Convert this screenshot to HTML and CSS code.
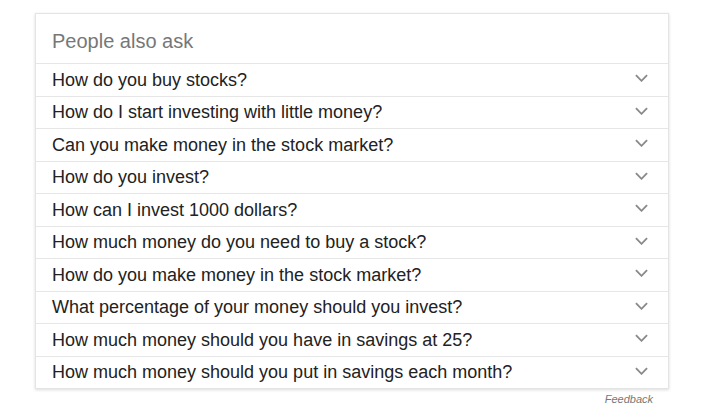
FILE: index.html
```html
<!DOCTYPE html>
<html>
<head>
<meta charset="utf-8">
<link rel="stylesheet" href="styles.css">
</head>
<body>
<div class="wrap">
  <div class="card">
    <div class="head">People also ask</div>
    <div class="row"><span>How do you buy stocks?</span><svg class="chev" viewBox="0 0 14 8"><path d="M1 1l6 6 6-6"/></svg></div>
    <div class="row"><span>How do I start investing with little money?</span><svg class="chev" viewBox="0 0 14 8"><path d="M1 1l6 6 6-6"/></svg></div>
    <div class="row"><span>Can you make money in the stock market?</span><svg class="chev" viewBox="0 0 14 8"><path d="M1 1l6 6 6-6"/></svg></div>
    <div class="row"><span>How do you invest?</span><svg class="chev" viewBox="0 0 14 8"><path d="M1 1l6 6 6-6"/></svg></div>
    <div class="row"><span>How can I invest 1000 dollars?</span><svg class="chev" viewBox="0 0 14 8"><path d="M1 1l6 6 6-6"/></svg></div>
    <div class="row"><span>How much money do you need to buy a stock?</span><svg class="chev" viewBox="0 0 14 8"><path d="M1 1l6 6 6-6"/></svg></div>
    <div class="row"><span>How do you make money in the stock market?</span><svg class="chev" viewBox="0 0 14 8"><path d="M1 1l6 6 6-6"/></svg></div>
    <div class="row"><span>What percentage of your money should you invest?</span><svg class="chev" viewBox="0 0 14 8"><path d="M1 1l6 6 6-6"/></svg></div>
    <div class="row"><span>How much money should you have in savings at 25?</span><svg class="chev" viewBox="0 0 14 8"><path d="M1 1l6 6 6-6"/></svg></div>
    <div class="row"><span>How much money should you put in savings each month?</span><svg class="chev" viewBox="0 0 14 8"><path d="M1 1l6 6 6-6"/></svg></div>
  </div>
  <div class="feedback">Feedback</div>
</div>
</body>
</html>
```
FILE: styles.css
```css
html, body {
  margin: 0;
  padding: 0;
  background: #fff;
  font-family: "Liberation Sans", Arial, sans-serif;
}
.wrap {
  padding: 13px 0 0 35px;
  width: 634px;
}
.card {
  border: 1px solid #e4e4e4;
  box-shadow: 0 1px 3px rgba(0, 0, 0, 0.14);
  background: #fff;
}
.head {
  height: 49px;
  box-sizing: border-box;
  padding: 15px 0 0 16px;
  font-size: 20px;
  line-height: 24px;
  color: #777;
}
.row {
  height: 32.5px;
  box-sizing: border-box;
  border-top: 1px solid #e6e6e6;
  display: flex;
  align-items: center;
  justify-content: space-between;
  padding: 0 20px 0 16px;
  font-size: 18px;
  color: #222;
}
.row span {
  line-height: 22px;
}
.chev {
  width: 13px;
  height: 8px;
  margin-top: -3px;
  fill: none;
  stroke: #8a8a8a;
  stroke-width: 2;
}
.feedback {
  text-align: right;
  padding: 4px 16px 0 0;
  font-size: 11px;
  font-style: italic;
  color: #777;
}
```
